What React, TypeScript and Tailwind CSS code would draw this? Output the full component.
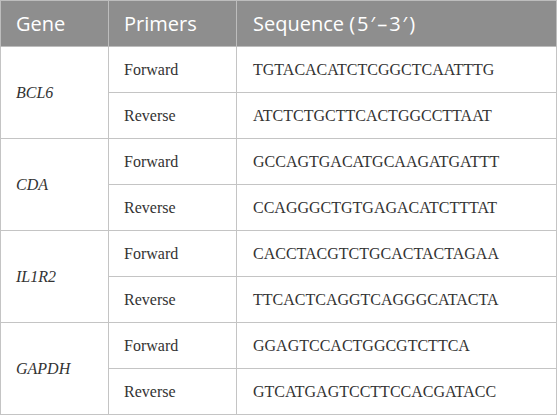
const rows = [
    { gene: "BCL6", fwd: "TGTACACATCTCGGCTCAATTTG", rev: "ATCTCTGCTTCACTGGCCTTAAT" },
    { gene: "CDA", fwd: "GCCAGTGACATGCAAGATGATTT", rev: "CCAGGGCTGTGAGACATCTTTAT" },
    { gene: "IL1R2", fwd: "CACCTACGTCTGCACTACTAGAA", rev: "TTCACTCAGGTCAGGGCATACTA" },
    { gene: "GAPDH", fwd: "GGAGTCCACTGGCGTCTTCA", rev: "GTCATGAGTCCTTCCACGATACC" },
];

const cell = "border border-[#c4c4c4] font-['Liberation_Serif',serif] text-[16px]";

export default function App() {
    return (
        <div className="w-[558px] h-[415px] bg-white">
            <table className="w-[557px] border-collapse table-fixed text-[#333]">
                <colgroup>
                    <col className="w-[108px]" />
                    <col className="w-[128px]" />
                    <col />
                </colgroup>
                <thead>
                    <tr className="h-[46px] bg-[#8e8e8e] text-white font-['Open_Sans',sans-serif] text-[20px]">
                        <th className="text-left font-normal pl-[15px] border border-[#bdbdbd]">Gene</th>
                        <th className="text-left font-normal pl-[15px] border border-[#bdbdbd]">Primers</th>
                        <th className="text-left font-normal pl-[16px] border border-[#bdbdbd]">
                            Sequence <span className="tracking-[2px]">(5′–3′)</span>
                        </th>
                    </tr>
                </thead>
                <tbody>
                    {rows.map((r) => (
                        <>
                            <tr key={r.gene + "f"} className="h-[46px]">
                                <td rowSpan={2} className={"italic pl-[15px] " + cell}>{r.gene}</td>
                                <td className={"pl-[15px] " + cell}>Forward</td>
                                <td className={"pl-[16px] " + cell}>{r.fwd}</td>
                            </tr>
                            <tr key={r.gene + "r"} className="h-[46px]">
                                <td className={"pl-[15px] " + cell}>Reverse</td>
                                <td className={"pl-[16px] " + cell}>{r.rev}</td>
                            </tr>
                        </>
                    ))}
                </tbody>
            </table>
        </div>
    );
}
